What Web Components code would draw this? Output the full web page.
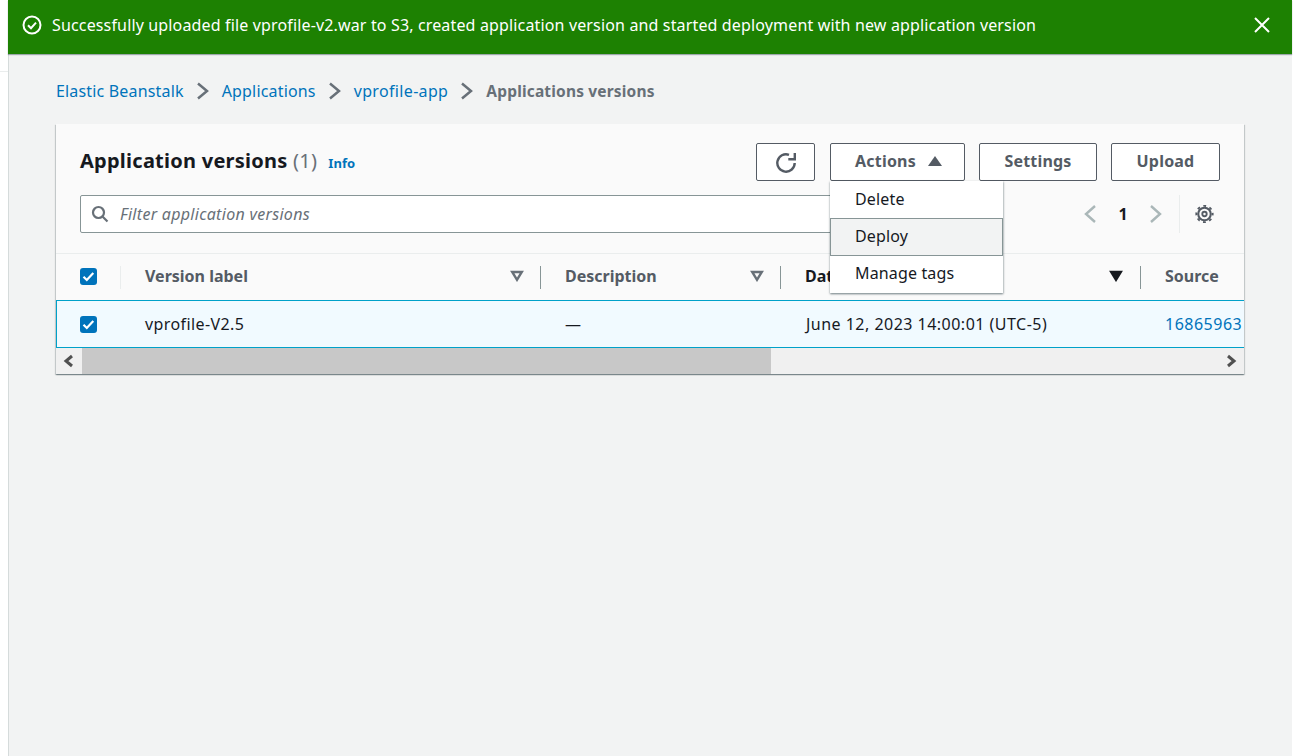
<!DOCTYPE html>
<html>
<head>
<meta charset="utf-8">
<title>Application versions</title>
<style>
  html, body { margin: 0; height: 100%; background: #fff; }
  body {
    font-family: "Noto Sans", "Open Sans", sans-serif;
    font-size: 16px;
    color: #16191f;
    overflow: hidden;
  }
</style>
</head>
<body>
<app-shell>
  <flash-bar>Successfully uploaded file vprofile-v2.war to S3, created application version and started deployment with new application version</flash-bar>
  <bread-crumbs></bread-crumbs>
  <versions-card></versions-card>
</app-shell>

<script>
class AppShell extends HTMLElement {
  constructor() {
    super();
    this.attachShadow({ mode: 'open' });
    this.shadowRoot.innerHTML = `
      <style>
        :host { display: flex; height: 756px; }
        #gutter { width: 8px; flex: none; background: #fff; position: relative; }
        #gutter::after {
          content: ''; position: absolute; left: 0; right: 0; top: 71px;
          height: 1px; background: #eaeded;
        }
        #main {
          flex: 1; min-width: 0; background: #f2f3f3;
          border-left: 1px solid #d5dbdb;
          margin-right: 2px;
        }
      </style>
      <div id="gutter"></div>
      <div id="main"><slot></slot></div>
    `;
  }
}

class FlashBar extends HTMLElement {
  constructor() {
    super();
    this.attachShadow({ mode: 'open' });
    this.shadowRoot.innerHTML = `
      <style>
        :host {
          display: flex; align-items: center; height: 54px; box-sizing: border-box;
          margin-left: -1px; padding: 0 21px 4px 14px; gap: 10px;
          background: #1d8102; color: #fff; font-size: 16px; letter-spacing: .15px;
          box-shadow: 0 1px 1px rgba(0,28,36,.35);
          position: relative;
        }
        #text { flex: 1; white-space: nowrap; }
        svg { display: block; flex: none; fill: none; stroke: #fff; }
      </style>
      <svg width="20" height="20" viewBox="0 0 20 20" stroke-width="2">
        <circle cx="10" cy="10" r="8.500"/>
        <path d="M6 10.200l3 3 5-5.500"/>
      </svg>
      <div id="text"><slot></slot></div>
      <svg width="18" height="18" viewBox="0 0 18 18" stroke-width="2" stroke="#eaeded">
        <path d="M2 2l14 14M16 2L2 16"/>
      </svg>
    `;
  }
}

class BreadCrumbs extends HTMLElement {
  constructor() {
    super();
    this.attachShadow({ mode: 'open' });
    const chevron = `<svg width="14" height="18" viewBox="0 0 14 18"><path d="M2 1.500l9 7.500-9 7.500" fill="none" stroke="#687078" stroke-width="2.500"/></svg>`;
    this.shadowRoot.innerHTML = `
      <style>
        :host {
          display: flex; align-items: center; height: 20px;
          margin: 27px 0 23px 47px; gap: 12px; font-size: 16px; letter-spacing: .17px;
        }
        a { color: #0073bb; text-decoration: none; }
        a.wide { letter-spacing: .34px; }
        span { color: #687078; font-weight: 700; font-size: 15.500px; }
        svg { display: block; }
      </style>
      <a href="#">Elastic Beanstalk</a>${chevron}
      <a href="#">Applications</a>${chevron}
      <a class="wide" href="#">vprofile-app</a>${chevron}
      <span>Applications versions</span>
    `;
  }
}

class AwsButton extends HTMLElement {
  constructor() {
    super();
    this.attachShadow({ mode: 'open' });
    this.shadowRoot.innerHTML = `
      <style>
        :host {
          display: flex; align-items: center; justify-content: center; gap: 12px;
          height: 38px; box-sizing: border-box; padding-bottom: 2px; background: #fff;
          border: 1px solid #545b64; border-radius: 2px; letter-spacing: .2px;
          color: #545b64; font-weight: 700; font-size: 16px; flex: none;
        }
      </style>
      <slot></slot>
    `;
  }
}

class ActionsMenu extends HTMLElement {
  constructor() {
    super();
    this.attachShadow({ mode: 'open' });
    this.shadowRoot.innerHTML = `
      <style>
        :host {
          display: block; position: absolute; z-index: 5; top: calc(100% + 1px); left: -1px;
          width: 173px; background: #fff; font-size: 16px; font-weight: 400; color: #16191f;
          letter-spacing: .15px;
          box-shadow: 0 1px 2px rgba(0,28,36,.5), 1px 1px 2px rgba(0,28,36,.1);
        }
        div {
          height: 37px; box-sizing: border-box; padding: 0 24px 2px;
          display: flex; align-items: center;
          border: 1px solid transparent;
        }
        .on { background: #f2f3f3; border-color: #879596; height: 38px; }
        .on + div { padding-bottom: 4px; }
      </style>
      <div>Delete</div>
      <div class="on">Deploy</div>
      <div>Manage tags</div>
    `;
  }
}

class AwsCheckbox extends HTMLElement {
  constructor() {
    super();
    this.attachShadow({ mode: 'open' });
    this.shadowRoot.innerHTML = `
      <style>
        :host { display: block; width: 17px; height: 17px; background: #0073bb; border-radius: 3px; flex: none; }
        svg { display: block; }
      </style>
      <svg width="17" height="17" viewBox="0 0 17 17"><path d="M3.500 8.800l3.300 3.200 6.500-7" fill="none" stroke="#fff" stroke-width="2.200"/></svg>
    `;
  }
}

class VersionsCard extends HTMLElement {
  constructor() {
    super();
    this.attachShadow({ mode: 'open' });
    const sortIcon = (filled) => `<svg class="sort" width="14" height="12" viewBox="0 0 14 12"><path d="M2.200 2h9.600L7 9.800z" fill="${filled ? '#16191f' : 'none'}" stroke="${filled ? '#16191f' : '#687078'}" stroke-width="2.400"/></svg>`;
    this.shadowRoot.innerHTML = `
      <style>
        :host {
          display: block; margin: 0 48px 0 47px; background: #fff; position: relative;
          box-shadow: 0 1px 1px 0 rgba(0,28,36,.3), 1px 1px 1px 0 rgba(0,28,36,.15), -1px 1px 1px 0 rgba(0,28,36,.15);
        }
        header {
          background: #fafafa; height: 130px; box-sizing: border-box;
          padding: 19px 24px 0; border-bottom: 1px solid #eaeded;
        }
        #top { display: flex; align-items: center; height: 38px; }
        h2 { margin: -2px 0 0; font-size: 20px; font-weight: 700; line-height: 38px; color: #16191f; letter-spacing: .25px; }
        h2 span { font-weight: 400; color: #687078; }
        #info { color: #0073bb; font-size: 13px; font-weight: 700; margin: 1px auto 0 11px; letter-spacing: .1px; }
        #btns { display: flex; gap: 14px; }
        #refresh { width: 59px; margin-right: 1px; padding-bottom: 0; }
        #actions { width: 135px; position: relative; padding-left: 2px; }
        #settings { width: 118px; }
        #upload { width: 109px; }
        #filter-row { display: flex; align-items: center; margin-top: 14px; height: 38px; }
        #filter {
          width: 800px; height: 38px; box-sizing: border-box; background: #fff;
          border: 1px solid #879596; border-radius: 2px; letter-spacing: .3px;
          display: flex; align-items: center; gap: 11px; padding-left: 10px;
          font-style: italic; color: #687078; font-size: 16px;
        }
        #pager { margin-left: auto; margin-right: 6px; display: flex; align-items: center; color: #16191f; font-weight: 700; font-size: 16px; }
        #pager .num { width: 20px; text-align: center; margin: 0 16px; }
        #pager .vsep { width: 1px; height: 38px; background: #eaeded; margin: 0 15px 0 16px; }
        svg { display: block; flex: none; }
        #cols, #row {
          display: grid; grid-template-columns: 65px 420px 240px 360px 103px;
          width: 1188px; overflow: hidden; box-sizing: border-box;
        }
        #cols { height: 46px; background: #fafafa; color: #545b64; font-weight: 700; }
        #cols .c { padding-bottom: 2px; }
        #row {
          height: 48px; background: #f1faff; color: #16191f; letter-spacing: .4px;
          box-shadow: inset 1px 0 0 #00a1c9, inset 0 1px 0 #00a1c9, inset 0 -1px 0 #00a1c9;
        }
        .c { display: flex; align-items: center; padding-left: 24px; white-space: nowrap; min-width: 0; position: relative; box-sizing: border-box; }
        #cols .c { padding-right: 17px; }
        #cols .c.date { padding-right: 18px; }
        #cols .c::after {
          content: ''; position: absolute; right: 0; top: 12px; height: 23px; width: 1px; background: #879596;
        }
        #cols .c.first::after { background: #eaeded; }
        #cols .c.last::after { display: none; }
        #row .date { padding-left: 25px; letter-spacing: .48px; }
        .sort { margin-left: auto; }
        a { color: #0073bb; text-decoration: none; }
        #row a { letter-spacing: .5px; }
        #bar { display: flex; height: 26px; background: #f0f0f0; align-items: center; }
        #bar .end { width: 26px; flex: none; display: flex; align-items: center; justify-content: center; }
        #thumb { width: 689px; height: 26px; background: #c8c8c8; }
        #bar .right { margin-left: auto; }
      </style>
      <header>
        <div id="top">
          <h2>Application versions <span>(1)</span></h2>
          <a id="info" href="#">Info</a>
          <div id="btns">
            <aws-button id="refresh">
              <svg width="22" height="22" viewBox="0 0 22 22" fill="none" stroke="#545b64" stroke-width="2.400">
                <path d="M19.700 12a8.700 8.700 0 1 1-5.700-8.200"/>
                <path d="M19.800 2v6.300h-6.500"/>
              </svg>
            </aws-button>
            <aws-button id="actions">
              Actions
              <svg width="14" height="10" viewBox="0 0 14 10"><path d="M7 0l7 10H0z" fill="#545b64"/></svg>
              <actions-menu></actions-menu>
            </aws-button>
            <aws-button id="settings">Settings</aws-button>
            <aws-button id="upload">Upload</aws-button>
          </div>
        </div>
        <div id="filter-row">
          <div id="filter">
            <svg width="18" height="18" viewBox="0 0 18 18" fill="none" stroke="#687078" stroke-width="2.200"><circle cx="7.500" cy="7.500" r="5.500"/><path d="M11.500 11.500l5 5"/></svg>
            Filter application versions
          </div>
          <div id="pager">
            <svg width="14" height="20" viewBox="0 0 14 20" fill="none" stroke="#aab7b8" stroke-width="2.400"><path d="M12 2L3 10l9 8"/></svg>
            <span class="num">1</span>
            <svg width="14" height="20" viewBox="0 0 14 20" fill="none" stroke="#aab7b8" stroke-width="2.400"><path d="M2 2l9 8-9 8"/></svg>
            <span class="vsep"></span>
            <svg width="19" height="20" viewBox="0 0 20 20" fill="none" stroke="#545b64" stroke-width="2.200">
              <circle cx="10" cy="10" r="6.600"/>
              <circle cx="10" cy="10" r="2.300" stroke-width="2"/>
              <circle cx="10" cy="10" r="8.600" stroke-width="2" stroke-dasharray="3 3.750" stroke-dashoffset="1.500"/>
            </svg>
          </div>
        </div>
      </header>
      <div id="cols">
        <div class="c first"><aws-checkbox></aws-checkbox></div>
        <div class="c">Version label${sortIcon(false)}</div>
        <div class="c">Description${sortIcon(false)}</div>
        <div class="c date"><span style="color:#16191f">Date created</span>${sortIcon(true)}</div>
        <div class="c last">Source</div>
      </div>
      <div id="row">
        <div class="c"><aws-checkbox></aws-checkbox></div>
        <div class="c">vprofile-V2.5</div>
        <div class="c">—</div>
        <div class="c date">June 12, 2023 14:00:01 (UTC-5)</div>
        <div class="c"><a href="#">16865963</a></div>
      </div>
      <div id="bar">
        <div class="end"><svg width="14" height="14" viewBox="0 0 14 14" fill="none" stroke="#505050" stroke-width="3"><path d="M10 2L4 7l6 5"/></svg></div>
        <div id="thumb"></div>
        <div class="end right"><svg width="14" height="14" viewBox="0 0 14 14" fill="none" stroke="#505050" stroke-width="3"><path d="M4 2l6 5-6 5"/></svg></div>
      </div>
    `;
  }
}

customElements.define('app-shell', AppShell);
customElements.define('flash-bar', FlashBar);
customElements.define('bread-crumbs', BreadCrumbs);
customElements.define('aws-button', AwsButton);
customElements.define('actions-menu', ActionsMenu);
customElements.define('aws-checkbox', AwsCheckbox);
customElements.define('versions-card', VersionsCard);
</script>
</body>
</html>
